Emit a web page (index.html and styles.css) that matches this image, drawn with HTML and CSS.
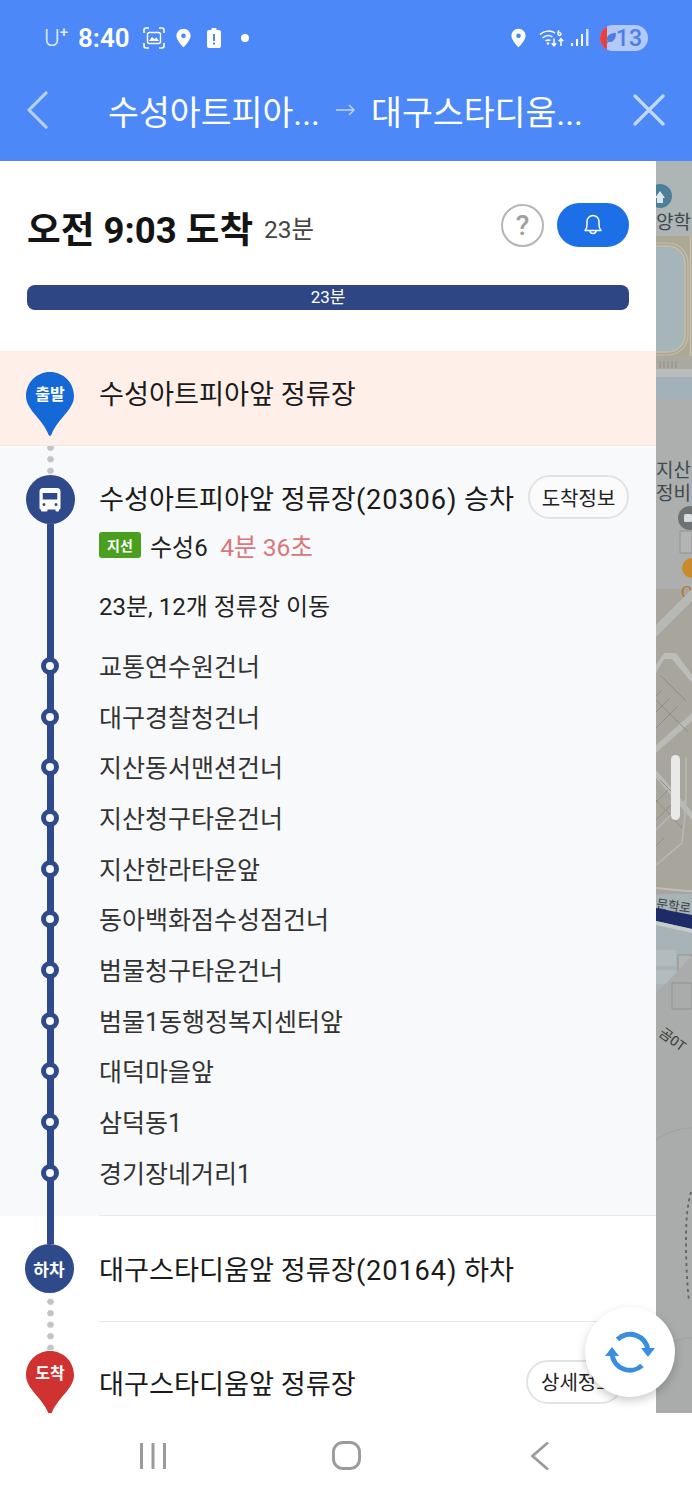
FILE: index.html
```html
<!DOCTYPE html>
<html lang="ko">
<head>
<meta charset="utf-8">
<title>길찾기</title>
<link rel="stylesheet" href="styles.css">
</head>
<body>
<div class="app">
  <header class="topbar">
    <div class="status">
      <div class="status-left">
        <span class="carrier">U<sup>+</sup></span>
        <span class="clock">8:40</span>
        <svg class="ic-shot" viewBox="0 0 22 22" fill="none" stroke="#fff" stroke-width="1.6"><path d="M1 6V3a2 2 0 0 1 2-2h3M16 1h3a2 2 0 0 1 2 2v3M21 16v3a2 2 0 0 1-2 2h-3M6 21H3a2 2 0 0 1-2-2v-3"/><rect x="4.5" y="5.5" width="13" height="11" rx="2" stroke-width="1.4"/><path d="M6 14l3-4 2.5 2 2-1.500 2.500 3.500z" fill="#fff" stroke="none"/></svg>
        <svg class="ic-pin" viewBox="0 0 16 20"><path fill="#fff" fill-rule="evenodd" d="M8 0a7.600 7.600 0 0 1 7.600 7.600C15.600 12.500 8 20 8 20S.4 12.500.4 7.600A7.600 7.600 0 0 1 8 0zm0 5.200a2.500 2.500 0 1 0 0 5 2.500 2.500 0 0 0 0-5z"/></svg>
        <svg class="ic-batt" viewBox="0 0 14 20"><path fill="#fff" fill-rule="evenodd" d="M4.500 0h5v2H12a2 2 0 0 1 2 2v14a2 2 0 0 1-2 2H2a2 2 0 0 1-2-2V4a2 2 0 0 1 2-2h2.500zM6 6v7h2V6zm0 8.500v2h2v-2z"/></svg>
        <span class="dot"></span>
      </div>
      <div class="status-right">
        <svg class="ic-pin" viewBox="0 0 16 20"><path fill="#fff" fill-rule="evenodd" d="M8 0a7.600 7.600 0 0 1 7.600 7.600C15.600 12.500 8 20 8 20S.4 12.500.4 7.600A7.600 7.600 0 0 1 8 0zm0 5.200a2.500 2.500 0 1 0 0 5 2.500 2.500 0 0 0 0-5z"/></svg>
        <svg class="ic-wifi" viewBox="0 0 27 20" fill="none" stroke="#fff" stroke-width="1.500"><path d="M1 6.500C5 2.500 12 2 16 5M3.500 10c3-2.700 7-3 10-1M6.500 13c1.500-1.200 3.500-1.300 5-.5"/><circle cx="9" cy="15.500" r="1.300" fill="#fff" stroke="none"/><path d="M15 10.500v7M12.800 15.300l2.200 2.500 2.200-2.500M22 18v-7M19.800 13.200l2.200-2.500 2.200 2.500M20 2.500c-1.500 2-1.500 5 .5 5s2-3-.3-2.800"/></svg>
        <svg class="ic-signal" viewBox="0 0 19 20" fill="#fff"><rect x="0" y="15" width="2" height="3"/><rect x="5" y="11" width="2" height="7"/><rect x="10" y="6" width="2" height="12"/><rect x="15" y="1" width="2.500" height="17" fill-opacity=".75"/></svg>
        <span class="battery"><span class="battery-low"></span><svg class="ic-leaf" viewBox="0 0 12 12"><path fill="#4a7fe6" d="M11 1C5 1 2 3.500 2 7c0 1 .3 1.700.7 2.300L1 11l1 .6 1.500-1.700C7.500 11 11 7.500 11 1z"/></svg><span class="battery-num">13</span></span>
      </div>
    </div>
    <div class="routebar">
      <svg class="ic-back" viewBox="0 0 24 40" fill="none" stroke="#b9d0fb" stroke-width="3.200" stroke-linecap="round" stroke-linejoin="round"><path d="M21 2L3 20l18 18"/></svg>
      <div class="route-title">
        <span class="route-from">수성아트피아...</span>
        <svg class="ic-arrow" viewBox="0 0 20 12" fill="none" stroke="#c4d8fc" stroke-width="1.400"><path d="M0 6h18M13 1l5 5-5 5"/></svg>
        <span class="route-to">대구스타디움...</span>
      </div>
      <svg class="ic-close" viewBox="0 0 32 32" fill="none" stroke="#c4d8fc" stroke-width="3.200" stroke-linecap="round"><path d="M2 2l28 28M30 2L2 30"/></svg>
    </div>
  </header>

  <main class="main">
    <section class="panel">
      <div class="summary">
        <div class="summary-head">
          <h1 class="arrival">오전 9:03 도착</h1>
          <span class="duration">23분</span>
          <span class="help">?</span>
          <span class="bell"><svg class="ic-bell" viewBox="0 0 20 24" fill="none" stroke="#fff" stroke-width="1.500" stroke-linejoin="round"><path d="M2 17.500c1.500-1.500 2-3 2-6V8.500a6 6 0 0 1 12 0v3c0 3 .5 4.500 2 6z"/><path d="M7 17.500a3 3 0 0 0 6 0"/></svg></span>
        </div>
        <div class="progress">23분</div>
      </div>

      <div class="row row-depart">
        <div class="gutter gutter-depart">
          <div class="pin">
            <svg viewBox="0 0 50 66"><path fill="#1469d6" d="M25 1C11.500 1 1 11.800 1 25c0 14 16 22 22.500 38.500.5 1.700 2.500 1.700 3 0C33 47 49 39 49 25 49 11.800 38.500 1 25 1z"/></svg>
            <span class="pin-text">출발</span>
          </div>
        </div>
        <div class="row-body">
          <span class="stop-title">수성아트피아앞 정류장</span>
        </div>
      </div>

      <div class="board">
        <div class="row row-board">
          <div class="gutter">
            <span class="dots dots-board"></span>
            <span class="node">
              <svg class="ic-bus" viewBox="0 0 22 24"><path fill="#fff" fill-rule="evenodd" d="M4 0h14a3.500 3.500 0 0 1 3.500 3.500V20a1.500 1.500 0 0 1-1.500 1.500v1a1 1 0 0 1-1 1h-1.500a1 1 0 0 1-1-1v-1h-8v1a1 1 0 0 1-1 1H3a1 1 0 0 1-1-1v-1A1.500 1.500 0 0 1 .5 20V3.500A3.500 3.500 0 0 1 4 0zm-.3 5v6.500h14.600V5zM5 15a1.500 1.500 0 1 0 0 3 1.500 1.500 0 0 0 0-3zm12 0a1.500 1.500 0 1 0 0 3 1.500 1.500 0 0 0 0-3z"/></svg>
            </span>
            <span class="line"></span>
          </div>
          <div class="board-body">
            <div class="board-top">
              <span class="stop-title">수성아트피아앞 정류장<span class="stop-code">(20306)</span> 승차</span>
              <span class="chip chip-board">도착정보</span>
            </div>
            <div class="bus-info">
              <span class="bus-type">지선</span>
              <span class="bus-name">수성6</span>
              <span class="bus-eta">4분 36초</span>
            </div>
            <div class="bus-move">23분, 12개 정류장 이동</div>
          </div>
        </div>
        <ol class="stops">
          <li class="stop"><span class="stop-mark"></span><span class="stop-name">교통연수원건너</span></li>
          <li class="stop"><span class="stop-mark"></span><span class="stop-name">대구경찰청건너</span></li>
          <li class="stop"><span class="stop-mark"></span><span class="stop-name">지산동서맨션건너</span></li>
          <li class="stop"><span class="stop-mark"></span><span class="stop-name">지산청구타운건너</span></li>
          <li class="stop"><span class="stop-mark"></span><span class="stop-name">지산한라타운앞</span></li>
          <li class="stop"><span class="stop-mark"></span><span class="stop-name">동아백화점수성점건너</span></li>
          <li class="stop"><span class="stop-mark"></span><span class="stop-name">범물청구타운건너</span></li>
          <li class="stop"><span class="stop-mark"></span><span class="stop-name">범물1동행정복지센터앞</span></li>
          <li class="stop"><span class="stop-mark"></span><span class="stop-name">대덕마을앞</span></li>
          <li class="stop"><span class="stop-mark"></span><span class="stop-name">삼덕동1</span></li>
          <li class="stop"><span class="stop-mark"></span><span class="stop-name">경기장네거리1</span></li>
        </ol>
        <div class="board-end"><span class="line"></span></div>
      </div>

      <div class="row row-alight">
        <div class="gutter">
          <span class="line line-alight"></span>
          <span class="node node-alight">하차</span>
          <span class="dots dots-alight"></span>
        </div>
        <div class="row-body row-ruled">
          <span class="stop-title">대구스타디움앞 정류장<span class="stop-code">(20164)</span> 하차</span>
        </div>
      </div>

      <div class="row row-dest">
        <div class="gutter gutter-dest">
          <span class="dots dots-dest"></span>
          <div class="pin">
            <svg viewBox="0 0 50 66"><path fill="#d03131" d="M25 1C11.500 1 1 11.800 1 25c0 14 16 22 22.500 38.500.5 1.700 2.500 1.700 3 0C33 47 49 39 49 25 49 11.800 38.500 1 25 1z"/></svg>
            <span class="pin-text">도착</span>
          </div>
        </div>
        <div class="dest-body">
          <span class="stop-title">대구스타디움앞 정류장</span>
          <span class="chip chip-dest">상세정보</span>
        </div>
      </div>
    </section>

    <aside class="map">
      <svg class="map-canvas" viewBox="656 161 36 1252" preserveAspectRatio="none">
        <rect x="656" y="161" width="36" height="1252" fill="#a9acaa"/>
        <rect x="656" y="161" width="36" height="75" fill="#aeb5b5"/>
        <circle cx="660" cy="196" r="12" fill="#4d7f99"/>
        <path d="M655 198l5-7 5 7h-2v5h-6v-5z" fill="#dfe5e8"/>
        <text class="map-label" x="656" y="229">양학</text>
        <rect x="656" y="236" width="36" height="120" fill="#aca896"/>
        <path d="M656 246h12a17 17 0 0 1 17 17v72a17 17 0 0 1-17 17h-12z" fill="#a6b5b9"/>
        <path d="M656 246h12a17 17 0 0 1 17 17v72a17 17 0 0 1-17 17h-12" fill="none" stroke="#c4bdaa" stroke-width="1.500"/>
        <path d="M656 243h12a20 20 0 0 1 20 20v72a20 20 0 0 1-20 20h-12" fill="none" stroke="#c4bdaa" stroke-width="1.200"/>
        <path d="M690.500 236v120" stroke="#c6c0ae" stroke-width="1.500"/>
        <rect x="656" y="356" width="36" height="13" fill="#a9a99f"/>
        <path d="M660 361v7M664 361v7M668 361v7M672 361v7M676 361v7" stroke="#8f8f88"/>
        <rect x="656" y="369" width="36" height="8" fill="#b8bcbc"/>
        <rect x="656" y="377" width="36" height="22" fill="#a3b2b8"/>
        <rect x="656" y="399" width="36" height="190" fill="#acafae"/>
        <text class="map-label" x="656" y="477">지산</text>
        <text class="map-label" x="656" y="500">정비</text>
        <circle cx="690" cy="518" r="12" fill="#6d7274"/>
        <rect x="684" y="514" width="8" height="8" rx="1.500" fill="#d8dadb"/>
        <path d="M680 531h12v22h-12z" fill="#b4b5b3" stroke="#8f9291"/>
        <circle cx="692" cy="568" r="10" fill="#c98a2e"/>
        <rect x="656" y="589" width="36" height="305" fill="#a8a69c"/>
        <text class="map-label map-orange" x="681" y="598">C</text>
        <path d="M656 625l36-36v12l-36 36z" fill="#b8b9b5"/>
        <path d="M656 665l8-12 12 0 16 22v8l-20-24h-8l-8 14z" fill="#bcbdb9"/>
        <path d="M656 745l36-32v8l-36 32zM656 770l36 42v8l-36-42z" fill="#babbb7"/>
        <path d="M660 675l26 26M656 700l32 32M662 690l-6 6M670 698l-14 14M678 706l-22 22M660 780l18 18M656 800l26 28M668 790l-12 12M676 800l-20 20M664 838l-8 8" stroke="#8f8e86" fill="none"/>
        <path d="M656 830l30-30M656 865l26-22 4-40v-46" stroke="#b8b9b4" stroke-width="1.500" fill="none"/>
        <path d="M656 888l30 3 6 0" stroke="#bdbeb9" stroke-width="2" fill="none"/>
        <rect x="656" y="894" width="36" height="100" fill="#a7b3b6"/>
        <text class="map-label map-road" x="656" y="908" transform="rotate(8 656 908)">문학로</text>
        <path d="M656 908l36 7v14l-36-8z" fill="#1d2c66"/>
        <path d="M656 921l36 8v4l-36-8z" fill="#c7cbcb"/>
        <path d="M656 950h20v16h-20zM656 970h20v14h-20z" fill="#b2bcbf"/>
        <path d="M678 955h14v22h-14z" fill="#b3b5b2" stroke="#8f9291"/>
        <path d="M656 994l36-38v50h-36z" fill="#a9acaa"/>
        <path d="M672 983h20v26h-20z" fill="none" stroke="#8f9291"/>
        <text class="map-label map-road map-road-small" x="658" y="1035" transform="rotate(36 658 1035)">곰0T</text>
        <path d="M656 1140c12-8 24-12 36-12M656 1350c12-8 24-12 36-12" stroke="#9ea19f" fill="none"/>
        <path d="M691 1192c-4 14-5 30-5 50 0 20 1 40 3 60" stroke="#5f6361" stroke-width="1.800" stroke-dasharray="3 3.500" fill="none"/>
      </svg>
      <span class="scrollbar"></span>
    </aside>
  </main>

  <nav class="sysnav">
    <svg class="ic-recent" viewBox="0 0 26 26" fill="#9b9b9b"><rect x="0" y="0" width="3" height="26"/><rect x="11.500" y="0" width="3" height="26"/><rect x="23" y="0" width="3" height="26"/></svg>
    <svg class="ic-home" viewBox="0 0 30 30" fill="none" stroke="#9b9b9b" stroke-width="3"><rect x="1.500" y="1.500" width="27" height="27" rx="10"/></svg>
    <svg class="ic-sysback" viewBox="1 0 18 30" fill="none" stroke="#9b9b9b" stroke-width="2.800"><path d="M18 1.500L2.500 15 18 28.500"/></svg>
  </nav>

  <button class="fab" type="button" aria-label="새로고침">
    <svg class="ic-refresh" viewBox="0 0 52 52" fill="none" stroke="#3b8de0" stroke-width="5"><path d="M13.500 13.500A18 18 0 0 1 44 24"/><path d="M38 39.500A18 18 0 0 1 8 28"/><path d="M37 22h14l-7 9zM1 30h14l-7-9z" fill="#3b8de0" stroke="none"/></svg>
  </button>
</div>
</body>
</html>
```

FILE: styles.css
```css
* { box-sizing: border-box; }
html, body { margin: 0; padding: 0; }
body {
  width: 692px;
  height: 1500px;
  overflow: hidden;
  background: #fff;
  color: #1c1c1c;
  font-family: Roboto, "Noto Sans CJK KR", sans-serif;
}
.app { position: relative; display: flex; flex-direction: column; width: 692px; height: 1500px; }

/* top */
.topbar { flex: none; height: 161px; background: #4d88f8; color: #fff; }
.status { display: flex; justify-content: space-between; align-items: center; height: 76px; padding: 0 44px 0 44px; }
.status-left, .status-right { display: flex; align-items: center; }
.carrier { font-size: 24px; font-weight: 300; width: 34px; line-height: 1; color: #e4edfe; }
.carrier sup { font-size: 15px; font-weight: 500; vertical-align: 9px; line-height: 0; }
.clock { font-size: 26px; font-weight: 600; width: 65px; }
.ic-shot { width: 22px; height: 22px; margin-right: 11px; }
.ic-pin { width: 15px; height: 20px; }
.ic-batt { width: 14px; height: 20px; margin-left: 16px; }
.dot { width: 8px; height: 8px; border-radius: 50%; background: #fff; margin-left: 20px; }
.ic-wifi { width: 27px; height: 20px; margin-left: 13px; }
.ic-signal { width: 19px; height: 20px; margin-left: 5px; }
.battery { position: relative; display: flex; align-items: center; justify-content: flex-end; width: 48px; height: 26px; margin-left: 10px; padding-right: 6px; border-radius: 13px; background: #b3c9f7; overflow: hidden; }
.battery-low { position: absolute; left: 0; top: 0; bottom: 0; width: 7px; background: #e8403f; }
.ic-leaf { position: absolute; left: 5px; top: 7px; width: 12px; height: 12px; }
.battery-num { font-size: 23px; font-weight: 500; color: #4a7fe6; line-height: 1; }
.routebar { display: flex; align-items: center; height: 85px; padding: 0 27px 17px 26px; }
.ic-back { flex: none; width: 23px; height: 38px; }
.route-title { flex: 1; display: flex; align-items: center; padding-left: 59px; font-size: 33.600px; color: #fff; white-space: nowrap; }
.route-from { width: 228px; }
.ic-arrow { width: 20px; height: 12px; margin-right: 15px; }
.route-to { width: 212px; }
.ic-close { flex: none; width: 32px; height: 32px; }

/* main */
.main { flex: none; display: flex; height: 1252px; overflow: hidden; }
.panel { flex: none; width: 656px; background: #fff; }
.map { position: relative; flex: none; width: 36px; }
.map-canvas { display: block; width: 36px; height: 1252px; }
.map-label { font-size: 19px; fill: #3e4a50; }
.map-orange { fill: #b7792d; font-size: 17px; }
.map-road { font-size: 12.500px; fill: #3a3d3c; }
.map-road-small { font-size: 14px; }
.scrollbar { position: absolute; left: 15px; top: 594px; width: 9px; height: 65px; border-radius: 5px; background: #e9e9e9; }

/* summary */
.summary { height: 190px; padding: 42px 27px 0; }
.summary-head { display: flex; align-items: center; height: 44px; }
.arrival { margin: 12px 0 0; font-size: 36.600px; font-weight: 700; color: #141414; line-height: 44px; white-space: nowrap; }
.duration { margin: 4px 0 0 11px; font-size: 24.500px; color: #444; }
.help { display: flex; align-items: center; justify-content: center; width: 43px; height: 43px; margin-left: auto; border: 2px solid #b5b5b5; border-radius: 50%; color: #a0a0a0; font-size: 28px; font-weight: 500; }
.bell { display: flex; align-items: center; justify-content: center; width: 72px; height: 44px; margin-left: 13px; border-radius: 22px; background: #1d6fe8; }
.ic-bell { width: 20px; height: 24px; }
.progress { height: 25px; margin-top: 38px; border-radius: 8px; background: #2e4683; color: #fff; font-size: 17px; line-height: 25px; text-align: center; }

/* rows */
.row { display: flex; }
.gutter { flex: none; display: flex; flex-direction: column; align-items: center; width: 100px; }
.row-body { flex: 1; display: flex; align-items: center; margin-left: -1px; }
.stop-title { font-size: 27.200px; color: #1a1a1a; white-space: nowrap; }
.stop-code { letter-spacing: .9px; }
.row-depart { height: 95px; background: #feefe9; border-bottom: 1px solid #f4e8e4; }
.row-depart .row-body { padding-bottom: 12px; }
.gutter-depart { padding-top: 20px; }
.pin { position: relative; flex: none; width: 50px; height: 66px; }
.pin svg { display: block; width: 50px; height: 66px; }
.pin-text { position: absolute; left: 0; right: 0; top: 13px; color: #fff; font-size: 16px; font-weight: 700; line-height: 22px; text-align: center; }
.line { flex: 1; width: 7px; background: #2e4a8a; }
.dots { flex: none; width: 7px; background-image: radial-gradient(circle, #c4c4c4 3px, transparent 3.500px); background-size: 7px 11.500px; background-repeat: repeat-y; }
.dots-board { height: 29px; background-position: 0 -4px; }
.node { flex: none; display: flex; align-items: center; justify-content: center; width: 49px; height: 49px; border-radius: 50%; background: #2e4a8a; }
.ic-bus { width: 22px; height: 24px; }

.board { background: #f8f9fb; }
.row-board { height: 194.650px; }
.board-body { flex: 1; min-width: 0; margin-left: -1px; padding: 29px 27px 0 0; }
.board-top { display: flex; align-items: center; justify-content: space-between; height: 44px; }
.chip { flex: none; display: flex; align-items: center; height: 44px; border: 2px solid #e2e3e5; border-radius: 22px; background: #fff; font-size: 20px; color: #222; white-space: nowrap; }
.chip-board { justify-content: center; width: 101px; background: #fbfbfc; }
.chip-dest { width: 97px; padding-left: 13px; }
.bus-info { display: flex; align-items: center; height: 28px; margin-top: 12px; }
.bus-type { display: flex; align-items: center; justify-content: center; width: 42px; height: 26px; border-radius: 3px; background: #4aa01e; color: #fff; font-size: 14px; font-weight: 700; }
.bus-name { margin-left: 9px; font-size: 24px; color: #222; }
.bus-eta { margin-left: 12.500px; font-size: 24.600px; color: #d9777a; }
.bus-move { margin-top: 33px; font-size: 24px; color: #222; line-height: 30px; }

.stops { list-style: none; margin: 0; padding: 0; }
.stop { position: relative; display: flex; align-items: center; height: 50.700px; padding: 0 0 2px 99px; }
.stop::before { content: ""; position: absolute; left: 47px; top: 0; bottom: 0; width: 7px; background: #2e4a8a; }
.stop-mark { position: absolute; left: 41px; top: 50%; width: 18px; height: 18px; margin-top: -9px; border: 5px solid #2e4a8a; border-radius: 50%; background: #f8f9fb; }
.stop-name { font-size: 25px; color: #333; white-space: nowrap; }
.board-end { display: flex; flex-direction: column; align-items: center; width: 100px; height: 18px; }

.row-alight { height: 106px; }
.line-alight { flex: none; height: 28px; }
.node-alight { color: #fff; font-size: 17px; font-weight: 700; margin-right: 2px; }
.dots-alight { flex: 1; background-position: 0 3px; }
.row-ruled { border-top: 1px solid #e8e9eb; border-bottom: 1px solid #e8e9eb; padding-bottom: 2px; margin-top: -1px; }
.row-dest { height: 92px; }
.gutter-dest { height: 92px; }
.dots-dest { height: 28px; background-position: 0 -3px; }
.dest-body { flex: 1; display: flex; align-items: center; justify-content: space-between; height: 100px; margin-left: -1px; padding: 19px 33px 0 0; }

/* system nav */
.sysnav { flex: none; position: relative; display: flex; align-items: center; height: 87px; padding: 0 143px 2px 140px; justify-content: space-between; background: #fff; }
.ic-recent { width: 26px; height: 26px; }
.ic-home { width: 29px; height: 29px; margin-right: 4px; }
.ic-sysback { width: 18px; height: 30px; }

/* refresh */
.fab { position: absolute; left: 585px; top: 1307px; display: flex; align-items: center; justify-content: center; width: 90px; height: 90px; padding: 0; border: 0; border-radius: 50%; background: #fff; box-shadow: 0 4px 10px rgba(0, 0, 0, .2); }
.ic-refresh { width: 52px; height: 52px; }
```
